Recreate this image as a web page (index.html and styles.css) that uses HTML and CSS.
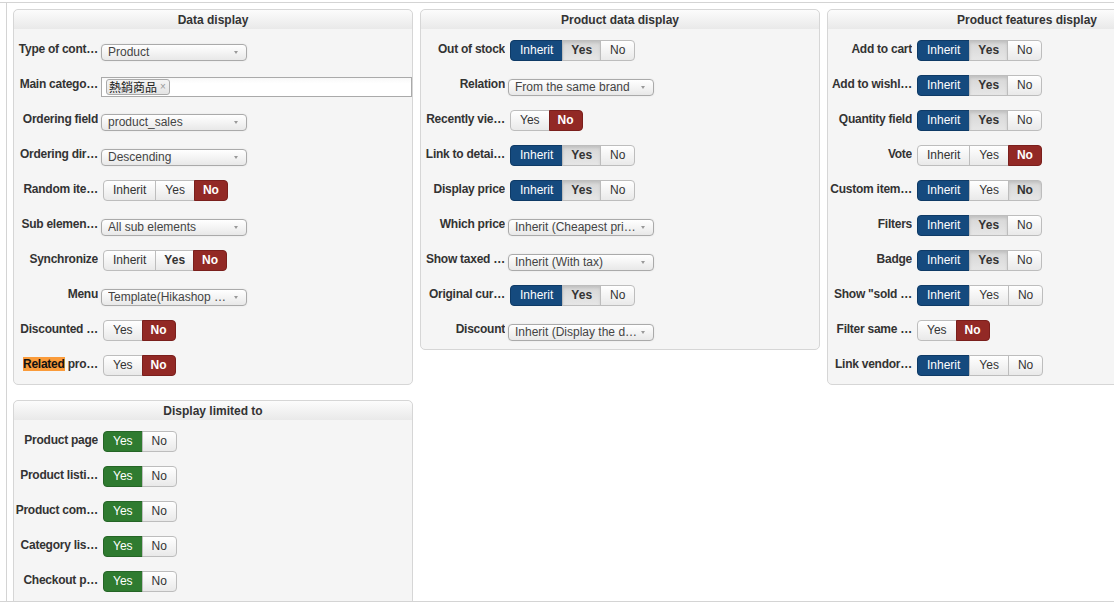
FILE: index.html
```html
<!DOCTYPE html>
<html lang="en">
<head>
    <meta charset="UTF-8">
    <title>Module options</title>
    <link rel="stylesheet" href="styles.css">
</head>
<body>
<div class="frame">
  <div class="frame-inner">
    <div class="columns">

      <div class="col">
        <div class="panel">
          <div class="panel-title">Data display</div>
          <div class="panel-body">
            <div class="row">
              <label class="lbl">Type of cont…</label>
              <div class="select"><span class="val">Product</span><i class="caret"></i></div>
            </div>
            <div class="row">
              <label class="lbl">Main catego…</label>
              <div class="multi"><span class="tag" lang="zh-Hant">熱銷商品<b>×</b></span></div>
            </div>
            <div class="row">
              <label class="lbl">Ordering field</label>
              <div class="select"><span class="val">product_sales</span><i class="caret"></i></div>
            </div>
            <div class="row">
              <label class="lbl">Ordering dir…</label>
              <div class="select"><span class="val">Descending</span><i class="caret"></i></div>
            </div>
            <div class="row">
              <label class="lbl">Random ite…</label>
              <div class="btns"><span class="btn">Inherit</span><span class="btn">Yes</span><span class="btn red">No</span></div>
            </div>
            <div class="row">
              <label class="lbl">Sub elemen…</label>
              <div class="select"><span class="val">All sub elements</span><i class="caret"></i></div>
            </div>
            <div class="row">
              <label class="lbl">Synchronize</label>
              <div class="btns"><span class="btn">Inherit</span><span class="btn bold">Yes</span><span class="btn red">No</span></div>
            </div>
            <div class="row">
              <label class="lbl">Menu</label>
              <div class="select"><span class="val">Template(Hikashop …</span><i class="caret"></i></div>
            </div>
            <div class="row">
              <label class="lbl">Discounted …</label>
              <div class="btns"><span class="btn">Yes</span><span class="btn red">No</span></div>
            </div>
            <div class="row">
              <label class="lbl"><mark>Related</mark> pro…</label>
              <div class="btns"><span class="btn">Yes</span><span class="btn red">No</span></div>
            </div>
          </div>
        </div>

        <div class="panel">
          <div class="panel-title">Display limited to</div>
          <div class="panel-body more">
            <div class="row">
              <label class="lbl">Product page</label>
              <div class="btns"><span class="btn green">Yes</span><span class="btn">No</span></div>
            </div>
            <div class="row">
              <label class="lbl">Product listi…</label>
              <div class="btns"><span class="btn green">Yes</span><span class="btn">No</span></div>
            </div>
            <div class="row">
              <label class="lbl">Product com…</label>
              <div class="btns"><span class="btn green">Yes</span><span class="btn">No</span></div>
            </div>
            <div class="row">
              <label class="lbl">Category lis…</label>
              <div class="btns"><span class="btn green">Yes</span><span class="btn">No</span></div>
            </div>
            <div class="row">
              <label class="lbl">Checkout p…</label>
              <div class="btns"><span class="btn green">Yes</span><span class="btn">No</span></div>
            </div>
          </div>
        </div>
      </div>

      <div class="col">
        <div class="panel">
          <div class="panel-title">Product data display</div>
          <div class="panel-body">
            <div class="row">
              <label class="lbl">Out of stock</label>
              <div class="btns"><span class="btn blue">Inherit</span><span class="btn set">Yes</span><span class="btn">No</span></div>
            </div>
            <div class="row">
              <label class="lbl">Relation</label>
              <div class="select"><span class="val">From the same brand</span><i class="caret"></i></div>
            </div>
            <div class="row">
              <label class="lbl">Recently vie…</label>
              <div class="btns"><span class="btn">Yes</span><span class="btn red">No</span></div>
            </div>
            <div class="row">
              <label class="lbl">Link to detai…</label>
              <div class="btns"><span class="btn blue">Inherit</span><span class="btn set">Yes</span><span class="btn">No</span></div>
            </div>
            <div class="row">
              <label class="lbl">Display price</label>
              <div class="btns"><span class="btn blue">Inherit</span><span class="btn set">Yes</span><span class="btn">No</span></div>
            </div>
            <div class="row">
              <label class="lbl">Which price</label>
              <div class="select"><span class="val">Inherit (Cheapest pri…</span><i class="caret"></i></div>
            </div>
            <div class="row">
              <label class="lbl">Show taxed …</label>
              <div class="select"><span class="val">Inherit (With tax)</span><i class="caret"></i></div>
            </div>
            <div class="row">
              <label class="lbl">Original cur…</label>
              <div class="btns"><span class="btn blue">Inherit</span><span class="btn set">Yes</span><span class="btn">No</span></div>
            </div>
            <div class="row">
              <label class="lbl">Discount</label>
              <div class="select"><span class="val">Inherit (Display the d…</span><i class="caret"></i></div>
            </div>
          </div>
        </div>
      </div>

      <div class="col">
        <div class="panel">
          <div class="panel-title">Product features display</div>
          <div class="panel-body">
            <div class="row">
              <label class="lbl">Add to cart</label>
              <div class="btns"><span class="btn blue">Inherit</span><span class="btn set">Yes</span><span class="btn">No</span></div>
            </div>
            <div class="row">
              <label class="lbl">Add to wishl…</label>
              <div class="btns"><span class="btn blue">Inherit</span><span class="btn set">Yes</span><span class="btn">No</span></div>
            </div>
            <div class="row">
              <label class="lbl">Quantity field</label>
              <div class="btns"><span class="btn blue">Inherit</span><span class="btn set">Yes</span><span class="btn">No</span></div>
            </div>
            <div class="row">
              <label class="lbl">Vote</label>
              <div class="btns"><span class="btn">Inherit</span><span class="btn">Yes</span><span class="btn red">No</span></div>
            </div>
            <div class="row">
              <label class="lbl">Custom item…</label>
              <div class="btns"><span class="btn blue">Inherit</span><span class="btn">Yes</span><span class="btn set">No</span></div>
            </div>
            <div class="row">
              <label class="lbl">Filters</label>
              <div class="btns"><span class="btn blue">Inherit</span><span class="btn set">Yes</span><span class="btn">No</span></div>
            </div>
            <div class="row">
              <label class="lbl">Badge</label>
              <div class="btns"><span class="btn blue">Inherit</span><span class="btn set">Yes</span><span class="btn">No</span></div>
            </div>
            <div class="row">
              <label class="lbl">Show "sold …</label>
              <div class="btns"><span class="btn blue">Inherit</span><span class="btn">Yes</span><span class="btn">No</span></div>
            </div>
            <div class="row">
              <label class="lbl">Filter same …</label>
              <div class="btns"><span class="btn">Yes</span><span class="btn red">No</span></div>
            </div>
            <div class="row">
              <label class="lbl">Link vendor…</label>
              <div class="btns"><span class="btn blue">Inherit</span><span class="btn">Yes</span><span class="btn">No</span></div>
            </div>
          </div>
        </div>
      </div>

    </div>
  </div>
</div>
</body>
</html>
```

FILE: styles.css
```css
html, body {
    margin: 0;
    padding: 0;
    background: #fff;
    overflow: hidden;
}
body {
    font-family: "Liberation Sans", Arial, "Noto Sans CJK TC", sans-serif;
    font-size: 12px;
    color: #333;
}
.frame {
    margin-top: 2px;
    height: 598px;
    border-top: 1px solid #d4d4d4;
    border-bottom: 1px solid #d4d4d4;
    overflow: hidden;
}
.frame-inner {
    margin-left: 6px;
    height: 100%;
    border-left: 1px solid #d4d4d4;
    padding: 6px 0 0 6px;
    box-sizing: border-box;
}
.columns {
    display: grid;
    grid-template-columns: 400px 400px 400px;
    column-gap: 7px;
    align-items: start;
}
.col {
    display: flex;
    flex-direction: column;
    gap: 15px;
}
.panel {
    background: #f5f5f5;
    border: 1px solid #d6d6d6;
    border-radius: 5px;
}
.panel-title {
    height: 19px;
    line-height: 20px;
    text-align: center;
    font-weight: bold;
    color: #333;
    border-radius: 5px 5px 0 0;
    background: linear-gradient(#fcfcfc, #e9e9e9);
}
.panel-body {
    padding: 4px 0 1px 4px;
}
/* list runs on below the fold */
.panel-body.more {
    padding-bottom: 40px;
}
.row {
    display: flex;
    align-items: center;
    height: 35px;
}
.lbl {
    width: 84px;
    flex: none;
    margin: 0 5px 0 -4px;
    padding-bottom: 3px;
    text-align: right;
    font-weight: bold;
    letter-spacing: -0.25px;
    white-space: nowrap;
    overflow: hidden;
    text-overflow: ellipsis;
}
.lbl mark {
    background: #fa9b3a;
    color: #111;
}
.select {
    position: relative;
    margin: 4px 0 0 -2px;
    width: 146px;
    height: 17px;
    box-sizing: border-box;
    border: 1px solid #aaa;
    border-radius: 4px;
    background: linear-gradient(#fff, #f4f4f4 50%, #e8e8e8);
    box-shadow: 0 0 2px rgba(0, 0, 0, 0.08);
    line-height: 15px;
    padding-left: 6px;
    color: #444;
}
.select .val {
    display: block;
    width: 126px;
    white-space: nowrap;
    overflow: hidden;
    text-overflow: ellipsis;
}
.caret {
    position: absolute;
    right: 8px;
    top: 6px;
    border-left: 2.5px solid transparent;
    border-right: 2.5px solid transparent;
    border-top: 3px solid #999;
}
.multi {
    margin: 2px 0 0 -2px;
    width: 311px;
    height: 20px;
    box-sizing: border-box;
    border: 1px solid #aaa;
    background: linear-gradient(#f8f8f8, #fff 30%);
    display: flex;
    align-items: center;
    padding-left: 4px;
}
.tag {
    display: inline-flex;
    align-items: center;
    height: 14px;
    padding: 0 3px 0 2px;
    border: 1px solid #aaa;
    border-radius: 3px;
    background: linear-gradient(#f4f4f4, #e4e4e4);
    color: #222;
    font-family: "Noto Sans CJK TC", sans-serif;
    font-size: 12px;
    line-height: 14px;
}
.tag b {
    font-family: "Liberation Sans", Arial, sans-serif;
    font-weight: normal;
    font-size: 10px;
    color: #999;
    margin-left: 3px;
}
.btns {
    display: flex;
    height: 21px;
}
.btn {
    display: block;
    height: 21px;
    line-height: 19px;
    box-sizing: border-box;
    padding: 0 9px;
    border: 1px solid #bdbdbd;
    margin-left: -1px;
    background: linear-gradient(#fff, #e9e9e9);
    color: #333;
}
.btn:first-child {
    margin-left: 0;
    border-radius: 4px 0 0 4px;
}
.btn:last-child {
    border-radius: 0 4px 4px 0;
}
.btn.bold,
.btn.set,
.btn.red {
    font-weight: bold;
    padding: 0 8px;
}
.btn.set {
    background: linear-gradient(#d6d6d6, #e6e6e6);
    box-shadow: inset 0 2px 3px rgba(0, 0, 0, 0.1);
}
.btn.blue {
    background: #154a7e;
    border-color: #0e3a66;
    color: #fff;
}
.btn.red {
    background: #922925;
    border-color: #7a1f1c;
    color: #fff;
}
.btn.green {
    background: #2f7b30;
    border-color: #256526;
    color: #fff;
}
```
